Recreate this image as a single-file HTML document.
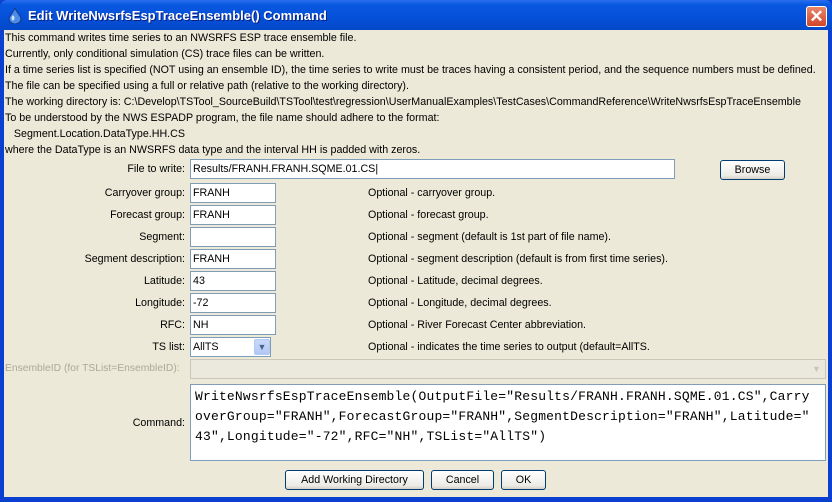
<!DOCTYPE html>
<html><head><style>
*{margin:0;padding:0;box-sizing:border-box}
body{width:832px;height:502px;overflow:hidden;font-family:"Liberation Sans",Tahoma,sans-serif;font-size:10.7px;color:#000;background:#0a3fd0;position:relative}
.tb{position:absolute;left:0;top:0;width:832px;height:30px;background:linear-gradient(#2a6ef0 0%,#0a58e0 15%,#0550d8 60%,#0448c8 100%);border-radius:7px 7px 0 0}
.tt{position:absolute;left:28px;top:8px;color:#fff;font-weight:bold;font-size:13px;text-shadow:1px 1px #0a1e80}
.body{position:absolute;left:4px;top:30px;width:824px;height:467px;background:#ece9d8}
.a{position:absolute;white-space:nowrap}
.l{position:absolute;right:647px;white-space:nowrap;text-align:right}
.f{position:absolute;background:#fff;border:1px solid #7f9db9;padding:3px 2px;height:20px;line-height:13px}
.btn{position:absolute;border:1px solid #003c74;border-radius:3px;background:linear-gradient(#fff,#ecebe6 80%,#d6d0c5);text-align:center;line-height:18px;height:20px}
.mono{font-family:"Liberation Mono",monospace;font-size:13px;line-height:20px;letter-spacing:0.18px}
</style></head><body>
<div class="tb"></div>
<svg class="a" style="left:8px;top:8px" width="14" height="16"><path d="M7 0 C9 5 13 8 13 11 A6 5 0 0 1 1 11 C1 8 5 5 7 0Z" fill="#4c8ce8" stroke="#123a8a"/><ellipse cx="5" cy="10" rx="1.5" ry="2.5" fill="#cfe4ff"/></svg>
<div class="tt">Edit WriteNwsrfsEspTraceEnsemble() Command</div>
<div class="a" style="left:806px;top:6px;width:21px;height:21px;border:1px solid #fff;border-radius:3px;background:linear-gradient(#e8866a,#d2452a);color:#fff;font-size:17px;font-weight:bold;text-align:center;line-height:19px">✕</div>
<div class="body"></div>
<div class="a" style="left:5px;top:30px;line-height:16px">This command writes time series to an NWSRFS ESP trace ensemble file.<br>Currently, only conditional simulation (CS) trace files can be written.<br>If a time series list is specified (NOT using an ensemble ID), the time series to write must be traces having a consistent period, and the sequence numbers must be defined.<br>The file can be specified using a full or relative path (relative to the working directory).<br>The working directory is: C:\Develop\TSTool_SourceBuild\TSTool\test\regression\UserManualExamples\TestCases\CommandReference\WriteNwsrfsEspTraceEnsemble<br>To be understood by the NWS ESPADP program, the file name should adhere to the format:<br>&nbsp;&nbsp;&nbsp;Segment.Location.DataType.HH.CS<br>where the DataType is an NWSRFS data type and the interval HH is padded with zeros.</div>

<div class="l" style="top:163px">File to write:</div>
<div class="f" style="left:190px;top:159px;width:485px">Results/FRANH.FRANH.SQME.01.CS|</div>
<div class="btn" style="left:720px;top:160px;width:65px">Browse</div>

<div class="l" style="top:187px">Carryover group:</div><div class="f" style="left:190px;top:183px;width:86px">FRANH</div><div class="a" style="left:368px;top:187px">Optional - carryover group.</div>
<div class="l" style="top:209px">Forecast group:</div><div class="f" style="left:190px;top:205px;width:86px">FRANH</div><div class="a" style="left:368px;top:209px">Optional - forecast group.</div>
<div class="l" style="top:231px">Segment:</div><div class="f" style="left:190px;top:227px;width:86px"></div><div class="a" style="left:368px;top:231px">Optional - segment (default is 1st part of file name).</div>
<div class="l" style="top:253px">Segment description:</div><div class="f" style="left:190px;top:249px;width:86px">FRANH</div><div class="a" style="left:368px;top:253px">Optional - segment description (default is from first time series).</div>
<div class="l" style="top:275px">Latitude:</div><div class="f" style="left:190px;top:271px;width:86px">43</div><div class="a" style="left:368px;top:275px">Optional - Latitude, decimal degrees.</div>
<div class="l" style="top:297px">Longitude:</div><div class="f" style="left:190px;top:293px;width:86px">-72</div><div class="a" style="left:368px;top:297px">Optional - Longitude, decimal degrees.</div>
<div class="l" style="top:319px">RFC:</div><div class="f" style="left:190px;top:315px;width:86px">NH</div><div class="a" style="left:368px;top:319px">Optional - River Forecast Center abbreviation.</div>
<div class="l" style="top:341px">TS list:</div><div class="f" style="left:190px;top:337px;width:81px">AllTS</div>
<div class="a" style="left:254px;top:339px;width:16px;height:16px;border-radius:2px;background:linear-gradient(#c8d8fa,#b2c8f5);border:1px solid #b4c8f0;color:#4d6185;font-size:9px;text-align:center;line-height:15px">&#9660;</div>
<div class="a" style="left:368px;top:341px">Optional - indicates the time series to output (default=AllTS.</div>

<div class="a" style="left:5px;top:363px;color:#aca899;font-size:10.3px">EnsembleID (for TSList=EnsembleID):</div>
<div class="f" style="left:190px;top:359px;width:636px;background:#ebe9dd;border-color:#c9c7ba"></div>
<div class="a" style="left:809px;top:361px;width:15px;height:16px;color:#c9c7ba;font-size:9px;text-align:center;line-height:16px">&#9660;</div>

<div class="l" style="top:417px">Command:</div>
<div class="f mono" style="left:190px;top:384px;width:636px;height:77px;padding:2px 4px;white-space:pre">WriteNwsrfsEspTraceEnsemble(OutputFile="Results/FRANH.FRANH.SQME.01.CS",Carry
overGroup="FRANH",ForecastGroup="FRANH",SegmentDescription="FRANH",Latitude="
43",Longitude="-72",RFC="NH",TSList="AllTS")</div>

<div class="btn" style="left:285px;top:470px;width:139px">Add Working Directory</div>
<div class="btn" style="left:431px;top:470px;width:63px">Cancel</div>
<div class="btn" style="left:501px;top:470px;width:45px">OK</div>
</body></html>
